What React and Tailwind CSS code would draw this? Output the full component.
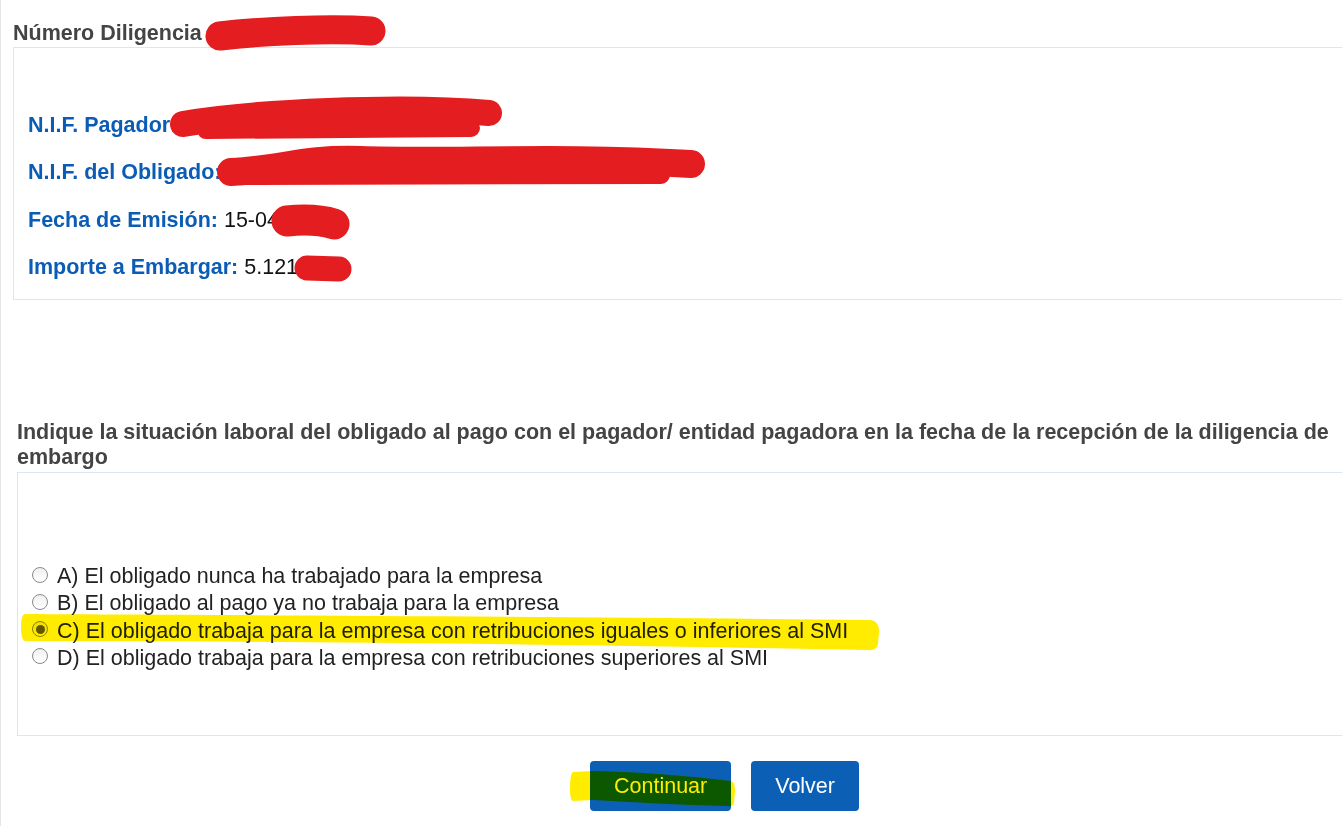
import React from "react";

function Radio({ checked, children }) {
  return (
    <div className="flex items-start leading-[27.3px]">
      <span className="mt-[3.5px] mr-[9px] flex h-[16px] w-[16px] shrink-0 items-center justify-center rounded-full border border-[#8a8a8a] bg-gradient-to-b from-[#f0f0f0] to-white">
        {checked && <span className="h-[9px] w-[9px] rounded-full bg-[#5e5e5e]" />}
      </span>
      <span className="text-[#222222]">{children}</span>
    </div>
  );
}

function Row({ label, value }) {
  return (
    <div className="leading-[47.3px] whitespace-nowrap">
      <span className="font-bold text-[#0b5cb4]">{label}</span>
      {value && <span className="text-[#111111]"> {value}</span>}
    </div>
  );
}

export default function App() {
  return (
    <div className="relative h-[826px] w-[1342px] overflow-hidden border-l border-[#e6e6e6] bg-white font-['Liberation_Sans',Arial,sans-serif] text-[21.5px] isolate">
      <div className="w-[1420px]">
        <div className="pl-[12px] pt-[21px]">
          <h2 className="mb-[2px] font-bold leading-[24px] text-[#444444]">Número Diligencia</h2>
          <div className="h-[253px] border border-[#dde5ee] pl-[14px] pt-[54px]">
            <Row label="N.I.F. Pagador:" />
            <Row label="N.I.F. del Obligado:" />
            <Row label="Fecha de Emisión:" value="15-04" />
            <Row label="Importe a Embargar:" value="5.121" />
          </div>
        </div>

        <div className="mt-[120px] pl-[16px]">
          <h2 className="mb-[2px] font-bold leading-[25px] text-[#444444]">
            Indique la situación laboral del obligado al pago con el pagador/ entidad pagadora en la fecha de la recepción de la diligencia de
            <br />
            embargo
          </h2>
          <div className="h-[264px] border border-[#dde5ee] pl-[14px] pt-[90px]">
            <Radio>A) El obligado nunca ha trabajado para la empresa</Radio>
            <Radio>B) El obligado al pago ya no trabaja para la empresa</Radio>
            <Radio checked>C) El obligado trabaja para la empresa con retribuciones iguales o inferiores al SMI</Radio>
            <Radio>D) El obligado trabaja para la empresa con retribuciones superiores al SMI</Radio>
          </div>
        </div>

        <div className="mt-[25px] flex gap-[20px] pl-[589px]">
          <button className="h-[50px] rounded-[4px] bg-[#0b5fb5] px-[24px] leading-[50px] text-white">Continuar</button>
          <button className="h-[50px] rounded-[4px] bg-[#0b5fb5] px-[24px] leading-[50px] text-white">Volver</button>
        </div>
      </div>

      {/* highlighter marks */}
      <svg className="pointer-events-none absolute left-0 top-0 mix-blend-multiply" width="1342" height="826" viewBox="0 0 1342 826">
        <path
          d="M24 614 C 200 615, 500 616, 870 620 Q 879 622 878 632 L 877 644 Q 876 651 866 650 C 500 643, 200 641, 24 641 Q 20 640 20 628 Q 20 614 24 614 Z"
          fill="#ffec00"
        />
        <path
          d="M572 772 L 592 771 C 640 772, 690 776, 730 781 Q 734 782 734 790 L 733 803 Q 732 807 726 806 C 680 805, 630 802, 592 800 L 572 801 Q 569 800 569 790 Q 569 773 572 772 Z"
          fill="#ffec00"
        />
      </svg>

      {/* redaction marks */}
      <svg className="pointer-events-none absolute left-0 top-0" width="1342" height="826" viewBox="0 0 1342 826">
        <g stroke="#e41e20" strokeLinecap="round" strokeLinejoin="round" fill="none">
          <path d="M219 36 C 260 31, 330 28, 370 31" strokeWidth="29" />
          <path d="M182 124 C 250 112, 400 105, 488 113" strokeWidth="26" />
          <path d="M205 130 L 470 128" strokeWidth="18" />
          <path d="M230 172 C 280 170, 300 158, 360 160 C 450 163, 560 156, 690 164" strokeWidth="28" />
          <path d="M232 176 L 660 175" strokeWidth="18" />
          <path d="M286 221 C 305 219, 320 220, 333 224" strokeWidth="31" />
          <path d="M306 268 L 338 269" strokeWidth="25" />
        </g>
      </svg>
    </div>
  );
}
